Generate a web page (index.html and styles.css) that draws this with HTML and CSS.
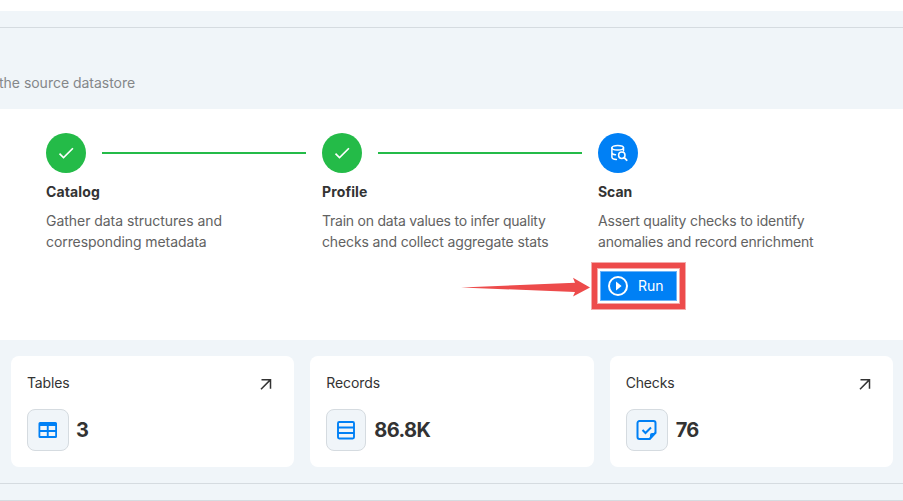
FILE: index.html
```html
<!DOCTYPE html>
<html lang="en">
<head>
<meta charset="utf-8">
<title>Datastore overview</title>
<link rel="stylesheet" href="styles.css">
</head>
<body>
<header class="top"></header>
<div class="divider-row"></div>
<section class="intro"><p>the source datastore</p></section>
<main class="steps">
  <article class="step">
    <div class="track"><span class="dot done"><svg width="20" height="20" viewBox="0 0 24 24"><path d="M21 7 9 19l-5.5-5.5 1.41-1.41L9 16.17 19.59 5.59z" fill="#fff"/></svg></span><span class="line"></span></div>
    <h2 class="t-catalog">Catalog</h2>
    <p><span class="d1">Gather data structures and</span><br><span class="d2">corresponding metadata</span></p>
  </article>
  <article class="step">
    <div class="track"><span class="dot done"><svg width="20" height="20" viewBox="0 0 24 24"><path d="M21 7 9 19l-5.5-5.5 1.41-1.41L9 16.17 19.59 5.59z" fill="#fff"/></svg></span><span class="line"></span></div>
    <h2 class="t-profile">Profile</h2>
    <p><span class="d3">Train on data values to infer quality</span><br><span class="d4">checks and collect aggregate stats</span></p>
  </article>
  <article class="step">
    <div class="track"><span class="dot active"><svg width="20" height="20" viewBox="0 0 20 20" fill="none" stroke="#fff" stroke-width="1.5" stroke-linecap="round"><ellipse cx="9.7" cy="4.700" rx="5.800" ry="2.300"/><path d="M3.900 4.700v9.300c0 1.500 1.800 2.300 4.500 2.500M3.900 9.400c0 1.200 1.400 2 3.600 2.300M15.500 4.700v3.300M3.900 6.500"/><circle cx="13.800" cy="12.300" r="3.200"/><path d="m16.200 14.700 2.500 2.500" stroke-width="1.800"/></svg></span></div>
    <h2 class="t-scan">Scan</h2>
    <p><span class="d5">Assert quality checks to identify</span><br><span class="d6">anomalies and record enrichment</span></p>
    <div class="run-wrap">
      <button class="run"><svg width="24" height="24" viewBox="0 0 24 24"><circle cx="12" cy="12" r="9" fill="none" stroke="#fff" stroke-width="2"/><path d="m10 7.500 5.600 4.500-5.600 4.500z" fill="#fff"/></svg><span>Run</span></button>
      <svg class="arrow" width="130" height="20" viewBox="0 0 130 20"><path d="M0 10.500 114 5.800 112 .800 129 10.500 112 19.500 114 14.900z" fill="#ed4b4b"/></svg>
    </div>
  </article>
</main>
<section class="stats">
  <article class="card">
    <div class="card-head"><h3 class="l-tables">Tables</h3><svg width="24" height="24" viewBox="0 0 24 24"><path d="M7.500 7.700h9V16.800M16.300 7.900 7 17.200" fill="none" stroke="#333" stroke-width="1.500"/></svg></div>
    <div class="card-value"><span class="tile"><svg width="24" height="24" viewBox="0 0 24 24"><path fill-rule="evenodd" fill="#0080f5" d="M4 4h15.500a1.500 1.500 0 0 1 1.500 1.500v13a1.500 1.500 0 0 1-1.500 1.500h-15.500a1.500 1.500 0 0 1-1.500-1.500V5.500a1.500 1.500 0 0 1 1.500-1.500zM4.300 8v4h6.500V8zM12.700 8v4h6.500V8zM4.300 14v4h6.500v-4zM12.700 14v4h6.500v-4z"/></svg></span><strong class="v-tables">3</strong></div>
  </article>
  <article class="card">
    <div class="card-head"><h3 class="l-records">Records</h3></div>
    <div class="card-value"><span class="tile narrow"><svg width="24" height="24" viewBox="0 0 24 24" fill="none" stroke="#0080f5" stroke-width="1.900"><rect x="4" y="4" width="16" height="16.500" rx="1.200"/><path d="M4 9.500h16M4 15h16"/></svg></span><strong class="v-records">86.8K</strong></div>
  </article>
  <article class="card">
    <div class="card-head"><h3 class="l-checks">Checks</h3><svg width="24" height="24" viewBox="0 0 24 24"><path d="M7.500 7.700h9V16.800M16.300 7.900 7 17.200" fill="none" stroke="#333" stroke-width="1.500"/></svg></div>
    <div class="card-value"><span class="tile"><svg width="24" height="24" viewBox="0 0 24 24"><path d="M20.500 14.500V5a2 2 0 0 0-2-2h-14a2 2 0 0 0-2 2v14a2 2 0 0 0 2 2h10z" fill="none" stroke="#0080f5" stroke-width="2"/><path d="M21.500 15h-4.500a2 2 0 0 0-2 2v5z" fill="#0080f5"/><path d="m7.500 12 3 3 5.500-5.500" fill="none" stroke="#0080f5" stroke-width="2"/></svg></span><strong class="v-checks">76</strong></div>
  </article>
</section>
<footer class="bottom"></footer>
</body>
</html>
```
FILE: styles.css
```css
* { box-sizing: border-box; }
body { margin: 0; width: 903px; height: 501px; overflow: hidden; background: #f0f5f9; color: #333; font: 14px/21px Inter, sans-serif; }
h2, h3, p { margin: 0; font-size: 14px; }
.top { height: 11px; background: #fff; }
.divider-row { height: 17px; border-bottom: 1px solid #d5dbe0; }
.intro { height: 81px; padding-top: 44px; color: #848789; white-space: nowrap; }
.intro p { margin-left: -1px; letter-spacing: -.02px; }
.steps { height: 231px; padding: 24px 0 0 46px; background: #fff; display: grid; grid-template-columns: 276px 276px 276px; }
.track { height: 40px; display: flex; align-items: center; gap: 16px; padding-right: 16px; }
.dot { width: 40px; height: 40px; border-radius: 50%; display: grid; place-items: center; flex: none; }
.done { background: #24bb48; }
.active { background: #0080f5; }
.line { height: 2px; flex: 1; background: #24bb48; }
.step h2 { margin-top: 8px; font-weight: 650; line-height: 21px; white-space: nowrap; letter-spacing: .12px; }
.step .t-scan { letter-spacing: -.05px; }
.step p { margin-top: 8px; color: #626262; white-space: nowrap; }
.d1 { letter-spacing: -.04px; }
.d2 { letter-spacing: -.08px; }
.d3 { letter-spacing: -.23px; }
.d4 { letter-spacing: -.13px; }
.d5 { letter-spacing: -.18px; }
.d6 { letter-spacing: -.2px; }
.run-wrap { position: relative; width: 95px; height: 48px; margin: 10px 0 0 -7px; padding: 9px; background: #fff; border: 1px solid #f4aaaa; box-shadow: inset 0 0 0 5px #ed4b4b, inset 0 0 0 6px #f4aaaa; }
.run { width: 77px; height: 30px; margin: -1px 0 0 -1px; padding: 0 0 1px 6px; border: 1px solid #6cb3f8; background: #0080f5; color: #fff; font: 14px/21px Inter, sans-serif; display: flex; align-items: center; gap: 8px; }
.run svg { flex: none; margin: 1px 0 0 -1px; }
.arrow { position: absolute; right: 94px; top: 14px; }
.stats { height: 144px; padding: 16px 10px 16px 11px; display: grid; grid-template-columns: repeat(3, 1fr); gap: 16px; border-bottom: 1px solid #d5dbe0; }
.card { padding: 16px; background: #fff; border-radius: 8px; }
.card-head { height: 24px; display: flex; justify-content: space-between; }
.card-head h3 { font-weight: 400; line-height: 21px; letter-spacing: -.17px; }
.card-head .l-records { letter-spacing: -.1px; }
.card-value { display: flex; align-items: center; gap: 8px; margin-top: 13px; }
.tile { width: 42px; height: 42px; border: 1px solid #d5dbe0; border-radius: 8px; background: #f0f5f9; display: grid; place-items: center; flex: none; }
.narrow { width: 40px; }
.card-value strong { font-size: 20px; line-height: 28px; font-weight: 700; }
.v-records { letter-spacing: -.6px; }
.v-checks { letter-spacing: -.6px; }
.v-tables { letter-spacing: -.4px; margin-left: -1px; }
.bottom { height: 17px; border-bottom: 1px solid #d5dbe0; }
```
